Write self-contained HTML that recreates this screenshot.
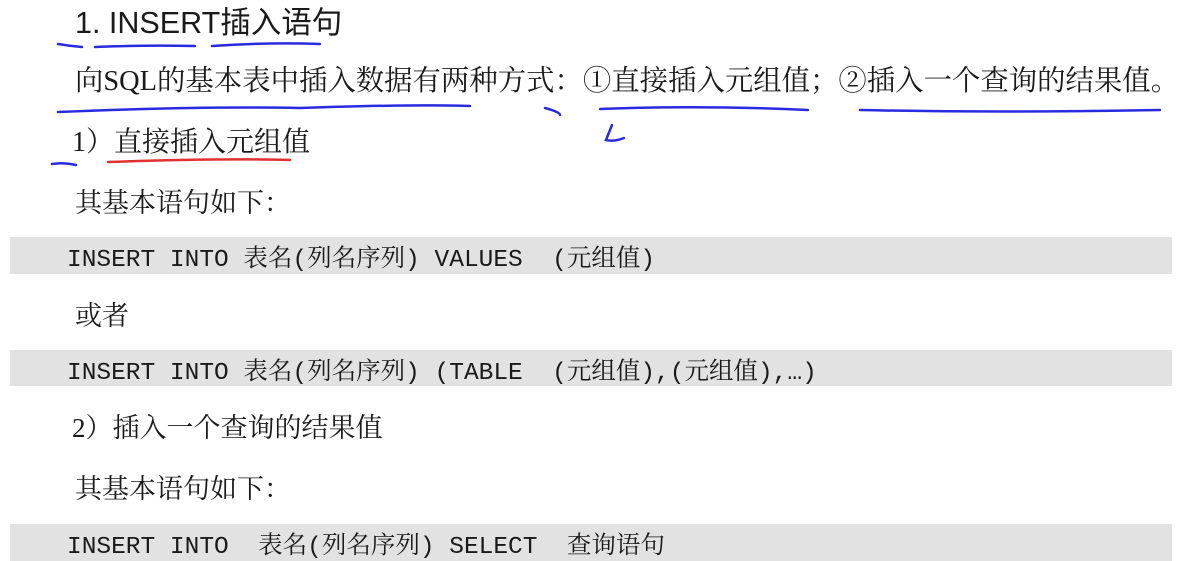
<!DOCTYPE html>
<html><head><meta charset="utf-8"><style>
body{margin:0;width:1182px;height:561px;background:#fff;position:relative;overflow:hidden;font-family:"Liberation Serif","Noto Serif CJK SC",serif;color:#1a1a1a}
.t{position:absolute;white-space:nowrap;line-height:1}
.bar{position:absolute;left:10px;width:1162px;background:#e2e2e2}
.code{position:absolute;left:67px;white-space:pre;font-family:"Liberation Mono","Noto Serif CJK SC",monospace;font-size:24.5px;line-height:1;color:#1a1a1a}
svg{position:absolute;left:0;top:0}
</style></head><body>
<div class="t" style="left:75px;top:8px;font-family:'Liberation Sans','Noto Sans CJK SC',sans-serif;font-size:30.5px;">1. INSERT插入语句</div>
<div class="t" style="left:75px;top:68px;font-size:28.4px;">向SQL的基本表中插入数据有两种方式：①直接插入元组值；②插入一个查询的结果值。</div>
<div class="t" style="left:72px;top:129px;font-size:28px;">1）直接插入元组值</div>
<div class="t" style="left:75px;top:190px;font-size:27px;">其基本语句如下：</div>
<div class="bar" style="top:237px;height:37px"></div>
<div class="code" style="top:249px">INSERT INTO 表名(列名序列) VALUES  (元组值)</div>
<div class="t" style="left:75px;top:303px;font-size:27px;">或者</div>
<div class="bar" style="top:350px;height:36px"></div>
<div class="code" style="top:362px">INSERT INTO 表名(列名序列) (TABLE  (元组值),(元组值),…)</div>
<div class="t" style="left:72px;top:415px;font-size:27px;">2）插入一个查询的结果值</div>
<div class="t" style="left:75px;top:476px;font-size:27px;">其基本语句如下：</div>
<div class="bar" style="top:524px;height:37px"></div>
<div class="code" style="top:536px">INSERT INTO  表名(列名序列) SELECT  查询语句</div>
<svg width="1182" height="561" fill="none" stroke-linecap="round">
<g stroke="#2a2ae0" stroke-width="2.5">
<path d="M58 44 Q70 46 82 47"/>
<path d="M95 47 Q140 45 195 46"/>
<path d="M212 46 Q270 42 320 44"/>
<path d="M58 112 Q200 106 300 108 Q420 104 470 106"/>
<path d="M545 108 Q560 112 560 115"/>
<path d="M600 109 Q700 105 808 110"/>
<path d="M860 110 Q1000 113 1160 110"/>
<path d="M52 164 Q64 162 76 165"/>
<path d="M612 125 L606 140 Q614 142 624 138"/>
</g>
<path d="M108 162 Q220 158 290 160" stroke="#e03030" stroke-width="2.5"/>
</svg>
</body></html>
